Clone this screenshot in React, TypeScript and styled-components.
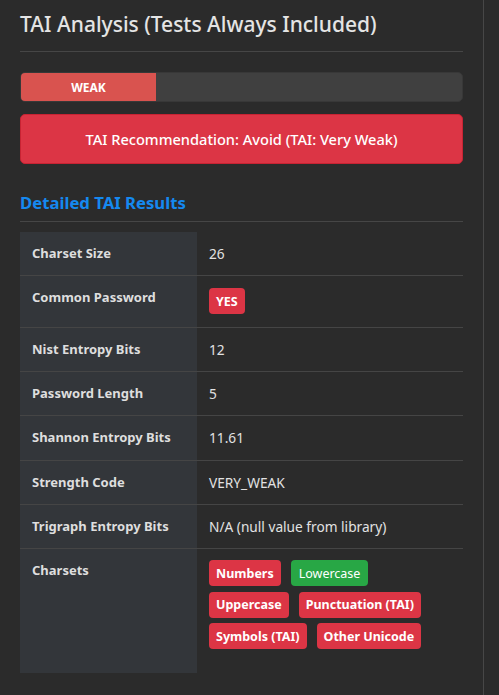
import React from "react";
import styled, { createGlobalStyle } from "styled-components";

const GlobalStyle = createGlobalStyle`
  html, body { margin: 0; padding: 0; background: #2b2b2b; }
  body { font-family: "Noto Sans", "Open Sans", sans-serif; color: #e2e2e2; }
`;

const Panel = styled.div`
  box-sizing: border-box;
  width: 484px;
  min-height: 695px;
  padding: 0 20px;
  border-right: 1px solid #474747;
  background: #2b2b2b;
`;

const Title = styled.h2`
  margin: 0;
  padding: 10px 0 13px;
  font-size: 21px;
  font-weight: 500;
  line-height: 28px;
  color: #e4e4e4;
  border-bottom: 1px solid #464646;
`;

const Progress = styled.div`
  margin-top: 20px;
  height: 30px;
  box-sizing: border-box;
  border: 1px solid #383838;
  border-radius: 5px;
  background: #404040;
  overflow: hidden;
  display: flex;
`;

const ProgressFill = styled.div`
  height: 100%;
  background: #d9534f;
  color: #fff;
  font-size: 12px;
  font-weight: 700;
  display: flex;
  align-items: center;
  justify-content: center;
`;

const Alert = styled.div`
  margin-top: 12px;
  height: 50px;
  box-sizing: border-box;
  border: 1px solid #c82333;
  border-radius: 5px;
  background: #dc3545;
  color: #fff;
  font-size: 14.6px;
  font-weight: 500;
  display: flex;
  align-items: center;
  justify-content: center;
`;

const SectionTitle = styled.h3`
  margin: 27px 0 0;
  padding-bottom: 6px;
  font-size: 16.7px;
  font-weight: 700;
  line-height: 24px;
  color: #1589f0;
  border-bottom: 1px solid #464646;
`;

const Table = styled.table`
  margin-top: 10px;
  width: 100%;
  border-collapse: collapse;
  line-height: 19px;
`;

const Row = styled.tr`
  & + & > * { border-top: 1px solid #454545; }
`;

const Label = styled.th`
  width: 153px;
  padding: 12px 12px;
  background: #33363a;
  color: #dedede;
  font-size: 13px;
  font-weight: 700;
  text-align: left;
  vertical-align: top;
`;

const Value = styled.td<{ $pb?: number }>`
  padding: 12px 12px ${(p) => p.$pb ?? 12}px;
  color: #e2e2e2;
  font-size: 13.7px;
  vertical-align: top;
`;

const CharsetsValue = styled(Value)`
  padding-top: 11px;
`;

const Badges = styled.div`
  display: flex;
  flex-wrap: wrap;
  gap: 5.5px 10px;
`;

const Badge = styled.span<{ $ok?: boolean }>`
  display: inline-flex;
  align-items: center;
  height: 26px;
  box-sizing: border-box;
  padding: 0 ${(p) => (p.$ok ? 8 : 7)}px;
  border-radius: 4px;
  background: ${(p) => (p.$ok ? "#28a745" : "#dc3545")};
  color: #fff;
  font-size: 12.5px;
  font-weight: ${(p) => (p.$ok ? 400 : 700)};
`;

const rows: [string, React.ReactNode, number?][] = [
  ["Charset Size", "26"],
  ["Common Password", <Badge key="y">YES</Badge>, 13],
  ["Nist Entropy Bits", "12"],
  ["Password Length", "5"],
  ["Shannon Entropy Bits", "11.61", 13],
  ["Strength Code", "VERY_WEAK"],
  ["Trigraph Entropy Bits", "N/A (null value from library)"],
];

const charsets: [string, boolean][] = [
  ["Numbers", false],
  ["Lowercase", true],
  ["Uppercase", false],
  ["Punctuation (TAI)", false],
  ["Symbols (TAI)", false],
  ["Other Unicode", false],
];

export default function App() {
  const strength = 30.6;
  return (
    <>
      <GlobalStyle />
      <Panel>
        <Title>TAI Analysis (Tests Always Included)</Title>
        <Progress>
          <ProgressFill style={{ width: `${strength}%` }}>WEAK</ProgressFill>
        </Progress>
        <Alert>TAI Recommendation: Avoid (TAI: Very Weak)</Alert>
        <SectionTitle>Detailed TAI Results</SectionTitle>
        <Table>
          <tbody>
            {rows.map(([k, v, pb]) => (
              <Row key={k}>
                <Label>{k}</Label>
                <Value $pb={pb}>{v}</Value>
              </Row>
            ))}
            <Row>
              <Label>Charsets</Label>
              <CharsetsValue $pb={24}>
                <Badges>
                  {charsets.map(([n, ok]) => (
                    <Badge key={n} $ok={ok}>
                      {n}
                    </Badge>
                  ))}
                </Badges>
              </CharsetsValue>
            </Row>
          </tbody>
        </Table>
      </Panel>
    </>
  );
}
